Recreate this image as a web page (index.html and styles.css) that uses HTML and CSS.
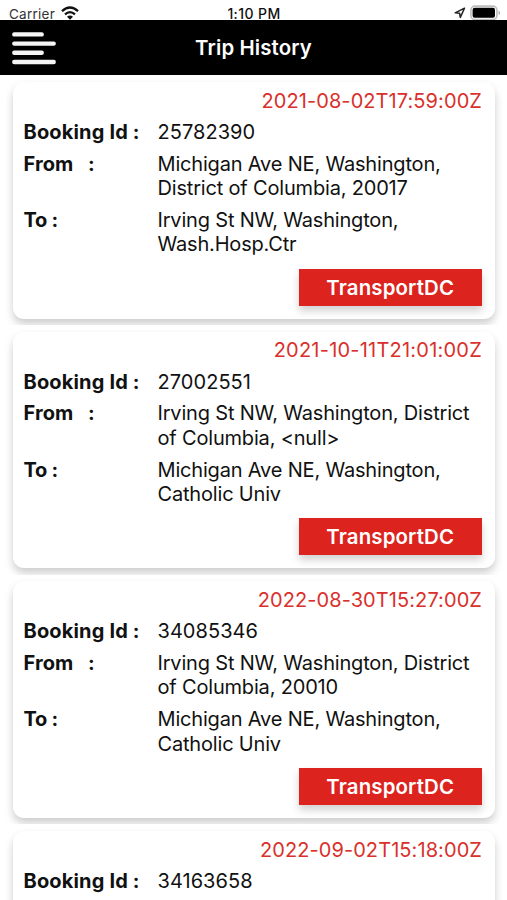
FILE: index.html
```
<!DOCTYPE html>
<html lang="en">
<head>
<meta charset="utf-8">
<title>Trip History</title>
<link rel="stylesheet" href="styles.css">
</head>
<body>
<div class="status">
  <div class="status-left"><span class="carrier">Carrier</span>
    <svg class="wifi" viewBox="0 0 18 14" width="18" height="14"><g fill="none" stroke="#111" stroke-width="2.3"><path d="M1 5.2Q9-2.3 17 5.2"/><path d="M4 8.4Q9 3.9 14 8.4"/></g><path d="M6 10.8Q9 8.4 12 10.8L9 13.8Z" fill="#111"/></svg>
  </div>
  <span class="time">1:10 PM</span>
  <div class="status-right">
    <svg viewBox="0 0 12 12" width="12" height="12"><path d="M1.2 5.8L10.5 1.2L6.3 10.4L5.6 6.3Z" fill="none" stroke="#222" stroke-width="1.5" stroke-linejoin="round"/></svg>
    <svg viewBox="0 0 31 16" width="31" height="16"><rect x=".9" y="1.1" width="26" height="13.4" rx="4" fill="#fff" stroke="#bdbdbd" stroke-width="1.6"/><rect x="2.6" y="2.8" width="22.4" height="10" rx="2" fill="#000"/><path d="M28.6 5.5Q31.6 7.8 28.6 10.2Z" fill="#aaa"/></svg>
  </div>
</div>
<header class="navbar">
  <svg class="menu" viewBox="0 0 44 33" width="44" height="33"><path d="M2.3 2.4H29.7M2.3 11.6H41.7M2.3 20.8H29.7M2.3 30H41.7" stroke="#f5f5f5" stroke-width="4.4" stroke-linecap="round"/></svg>
  <h1>Trip History</h1>
</header>
<main>
  <section class="cell"><article class="card">
    <time>2021-08-02T17:59:00Z</time>
    <dl>
      <dt class="booking">Booking Id :</dt><dd class="number">25782390</dd>
      <dt class="from">From &nbsp;&nbsp;:</dt><dd>Michigan Ave NE, Washington,<br>District of Columbia, 20017</dd>
      <dt>To :</dt><dd>Irving St NW, Washington,<br>Wash.Hosp.Ctr</dd>
    </dl>
    <button>TransportDC</button>
  </article></section>
  <section class="cell"><article class="card">
    <time class="wide">2021-10-11T21:01:00Z</time>
    <dl>
      <dt class="booking">Booking Id :</dt><dd class="number">27002551</dd>
      <dt class="from">From &nbsp;&nbsp;:</dt><dd>Irving St NW, Washington, District<br>of Columbia, &lt;null&gt;</dd>
      <dt>To :</dt><dd>Michigan Ave NE, Washington,<br>Catholic Univ</dd>
    </dl>
    <button>TransportDC</button>
  </article></section>
  <section class="cell"><article class="card">
    <time>2022-08-30T15:27:00Z</time>
    <dl>
      <dt class="booking">Booking Id :</dt><dd class="number">34085346</dd>
      <dt class="from">From &nbsp;&nbsp;:</dt><dd>Irving St NW, Washington, District<br>of Columbia, 20010</dd>
      <dt>To :</dt><dd>Michigan Ave NE, Washington,<br>Catholic Univ</dd>
    </dl>
    <button>TransportDC</button>
  </article></section>
  <section class="cell"><article class="card">
    <time>2022-09-02T15:18:00Z</time>
    <dl>
      <dt class="booking">Booking Id :</dt><dd class="number">34163658</dd>
    </dl>
  </article></section>
</main>
</body>
</html>
```
FILE: styles.css
```
* { box-sizing: border-box; }
body { margin: 0; height: 900px; overflow: hidden; display: flex; flex-direction: column; background: #fff; color: #111; font-family: Inter, "Liberation Sans", sans-serif; }
.status { height: 20.4px; flex: none; display: grid; grid-template-columns: 1fr auto 1fr; align-items: start; padding: 5px 6px 0 9px; line-height: 17px; font-size: 13.5px; }
.status-left { display: flex; gap: 6px; }
.carrier { color: #333; letter-spacing: .25px; padding-top: 1px; }
.wifi { margin-top: 1px; }
.time { font-weight: 500; font-size: 14px; letter-spacing: .4px; margin-right: 2px; }
.status-right { display: flex; justify-content: flex-end; gap: 4px; }
.status-right svg:first-child { margin-top: 2px; }
.navbar { height: 55px; flex: none; background: #000; color: #fff; display: grid; grid-template-columns: 1fr auto 1fr; align-items: center; padding: 0 12px; }
.menu { margin-top: 1px; }
h1 { grid-column: 2; margin: 0; font-size: 20.4px; line-height: 24px; font-weight: 600; letter-spacing: .12px; }
main { flex: 1; min-height: 0; overflow: hidden; }
.cell { height: 249.67px; padding: 6.5px 12.5px 6.5px 13px; background: #fff; overflow: hidden; }
.card { height: 100%; border-radius: 11px; background: #fff; box-shadow: 0 5px 9px rgba(0,0,0,.2); padding: 6.7px 12.5px 0 10.5px; display: flex; flex-direction: column; }
time { align-self: flex-end; color: #d9302c; font-size: 20px; line-height: 24.33px; letter-spacing: .08px; }
.wide { letter-spacing: .22px; }
dl { margin: 7.2px 0 0; display: grid; grid-template-columns: 134px 1fr; row-gap: 7.4px; font-size: 20px; line-height: 24.33px; }
dt { font-weight: 700; white-space: nowrap; letter-spacing: -.25px; }
.booking { letter-spacing: .16px; }
.from { letter-spacing: .1px; }
dd { margin: 0; white-space: nowrap; letter-spacing: -.18px; }
.number { letter-spacing: .05px; }
button { align-self: flex-end; margin: 12.2px 0 0; width: 183.5px; height: 37px; padding: 0; border: 0; background: #dc231e; color: #fff; font: 600 20.4px/38px Inter, "Liberation Sans", sans-serif; letter-spacing: .15px; box-shadow: 0 5px 8px rgba(0,0,0,.18); }
```
